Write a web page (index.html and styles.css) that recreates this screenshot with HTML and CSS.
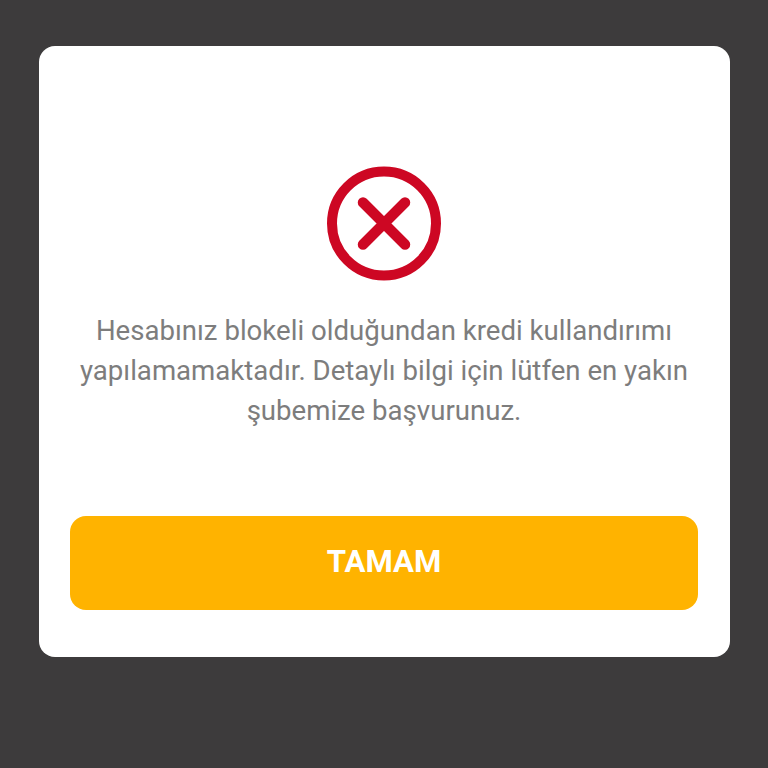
FILE: index.html
```html
<!DOCTYPE html>
<html lang="tr">
<head>
    <meta charset="UTF-8">
    <meta name="viewport" content="width=device-width, initial-scale=1.0">
    <title>Hata</title>
    <link rel="stylesheet" href="styles.css">
</head>
<body>
    <div class="modal_wrap">
        <div class="modal">
            <svg class="modal_icon" viewBox="0 0 116 116" aria-hidden="true">
                <circle cx="58" cy="57.5" r="52" fill="none" stroke="#cd0723" stroke-width="10"/>
                <path d="M37 36.5L79 78.5M79 36.5L37 78.5" fill="none" stroke="#cd0723" stroke-width="10.5" stroke-linecap="round"/>
            </svg>
            <p class="modal_text">Hesabınız blokeli olduğundan kredi kullandırımı yapılamamaktadır. Detaylı bilgi için lütfen en yakın şubemize başvurunuz.</p>
            <a href="javascript:void(0)" class="modal_btn">TAMAM</a>
        </div>
    </div>
</body>
</html>
```

FILE: styles.css
```css
* {
    box-sizing: border-box;
}

body {
    margin: 0;
    background-color: #3d3b3c;
    font-family: Roboto, "Liberation Sans", sans-serif;
}

.modal_wrap {
    height: 768px;
    padding: 46px 38px 0 39px;
}

.modal {
    display: flex;
    flex-direction: column;
    align-items: center;
    height: 611px;
    padding: 120px 32px 0 31px;
    background-color: #fff;
    border-radius: 16px;
}

.modal_icon {
    width: 116px;
    height: 116px;
    flex-shrink: 0;
}

.modal_text {
    width: 100%;
    margin: 29px 0 0;
    color: #7d7d7d;
    font-size: 27.6px;
    line-height: 40px;
    text-align: center;
}

.modal_btn {
    display: flex;
    align-items: center;
    justify-content: center;
    width: 100%;
    height: 94px;
    margin-top: 85px;
    padding-bottom: 3px;
    background-color: #ffb300;
    border-radius: 16px;
    color: #fff;
    font-size: 31.2px;
    font-weight: 700;
    text-decoration: none;
}
```
